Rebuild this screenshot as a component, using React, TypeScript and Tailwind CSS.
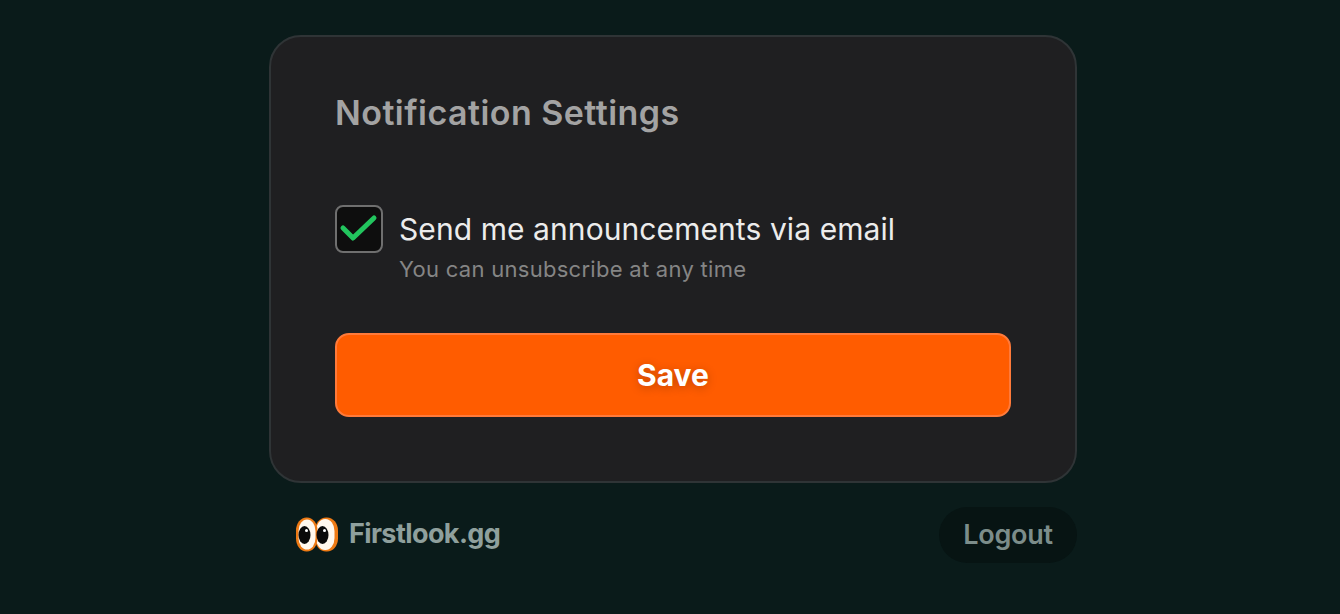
function EyesLogo() {
  return (
    <svg width="42" height="35" viewBox="0 0 42 35" fill="none" className="shrink-0">
      <rect x="19" y="0.5" width="23" height="34" rx="11" ry="13" fill="#ee7a14" />
      <rect x="20" y="2" width="18.5" height="31" rx="9" ry="12" fill="#fff8ee" />
      <rect x="0" y="0.5" width="21.5" height="34" rx="10.5" ry="13" fill="#ee7a14" />
      <rect x="2.5" y="2.5" width="17" height="30" rx="8.5" ry="11.5" fill="#fff8ee" />
      <ellipse cx="8.5" cy="18" rx="6" ry="9" fill="#0a0a0a" />
      <ellipse cx="26.5" cy="18" rx="6" ry="9" fill="#0a0a0a" />
      <circle cx="10.5" cy="13.5" r="1.5" fill="#ffffff" />
      <circle cx="28.5" cy="13.5" r="1.5" fill="#ffffff" />
    </svg>
  );
}

export default function App() {
  return (
    <div className="w-full h-[614px] bg-[#0a1b1a] flex flex-col items-center pt-[35px] pl-[6px] overflow-hidden font-['Inter']">
      <div className="w-[808px] h-[448px] bg-[#1f1f21] border-2 border-[#2f3436] rounded-[32px] px-[64px] pt-[56px] flex flex-col">
        <h1 className="text-[34px] leading-[40px] font-semibold text-[#a3a3a3] tracking-[0.45px]">Notification Settings</h1>
        <div className="flex gap-4 mt-[72px]">
          <div className="w-[48px] h-[48px] rounded-lg border-2 border-[#6f6f6f] bg-[#0e0e0e] flex items-center justify-center shrink-0">
            <svg width="44" height="44" viewBox="0 0 44 44" fill="none">
              <path d="M6 21 L16 31 L37 11" stroke="#22c55e" strokeWidth="5" strokeLinecap="round" strokeLinejoin="round" />
            </svg>
          </div>
          <div className="flex flex-col">
            <span className="text-[30px] leading-[48px] text-[#ececec] tracking-[0.08px]">Send me announcements via email</span>
            <span className="text-[22px] leading-[32px] text-[#858585] tracking-[0.28px]">You can unsubscribe at any time</span>
          </div>
        </div>
        <button className="mt-[48px] w-[676px] h-[84px] rounded-[14px] bg-[#ff5c00] border-2 border-[#ff7a3a] text-white text-[30px] font-bold [text-shadow:0_2px_10px_rgba(0,0,0,0.25)]">Save</button>
      </div>
      <div className="w-[808px] flex items-center justify-between mt-[24px] pl-[27px]">
        <div className="flex items-center gap-[11px] -mt-[2px]">
          <EyesLogo />
          <span className="text-[27px] font-bold text-[#8fa09d] tracking-[-0.6px]">Firstlook.gg</span>
        </div>
        <button className="w-[138px] h-[56px] rounded-full bg-[#071413] text-[27px] font-semibold text-[#7c8d8a] tracking-[-0.25px]">Logout</button>
      </div>
    </div>
  );
}
